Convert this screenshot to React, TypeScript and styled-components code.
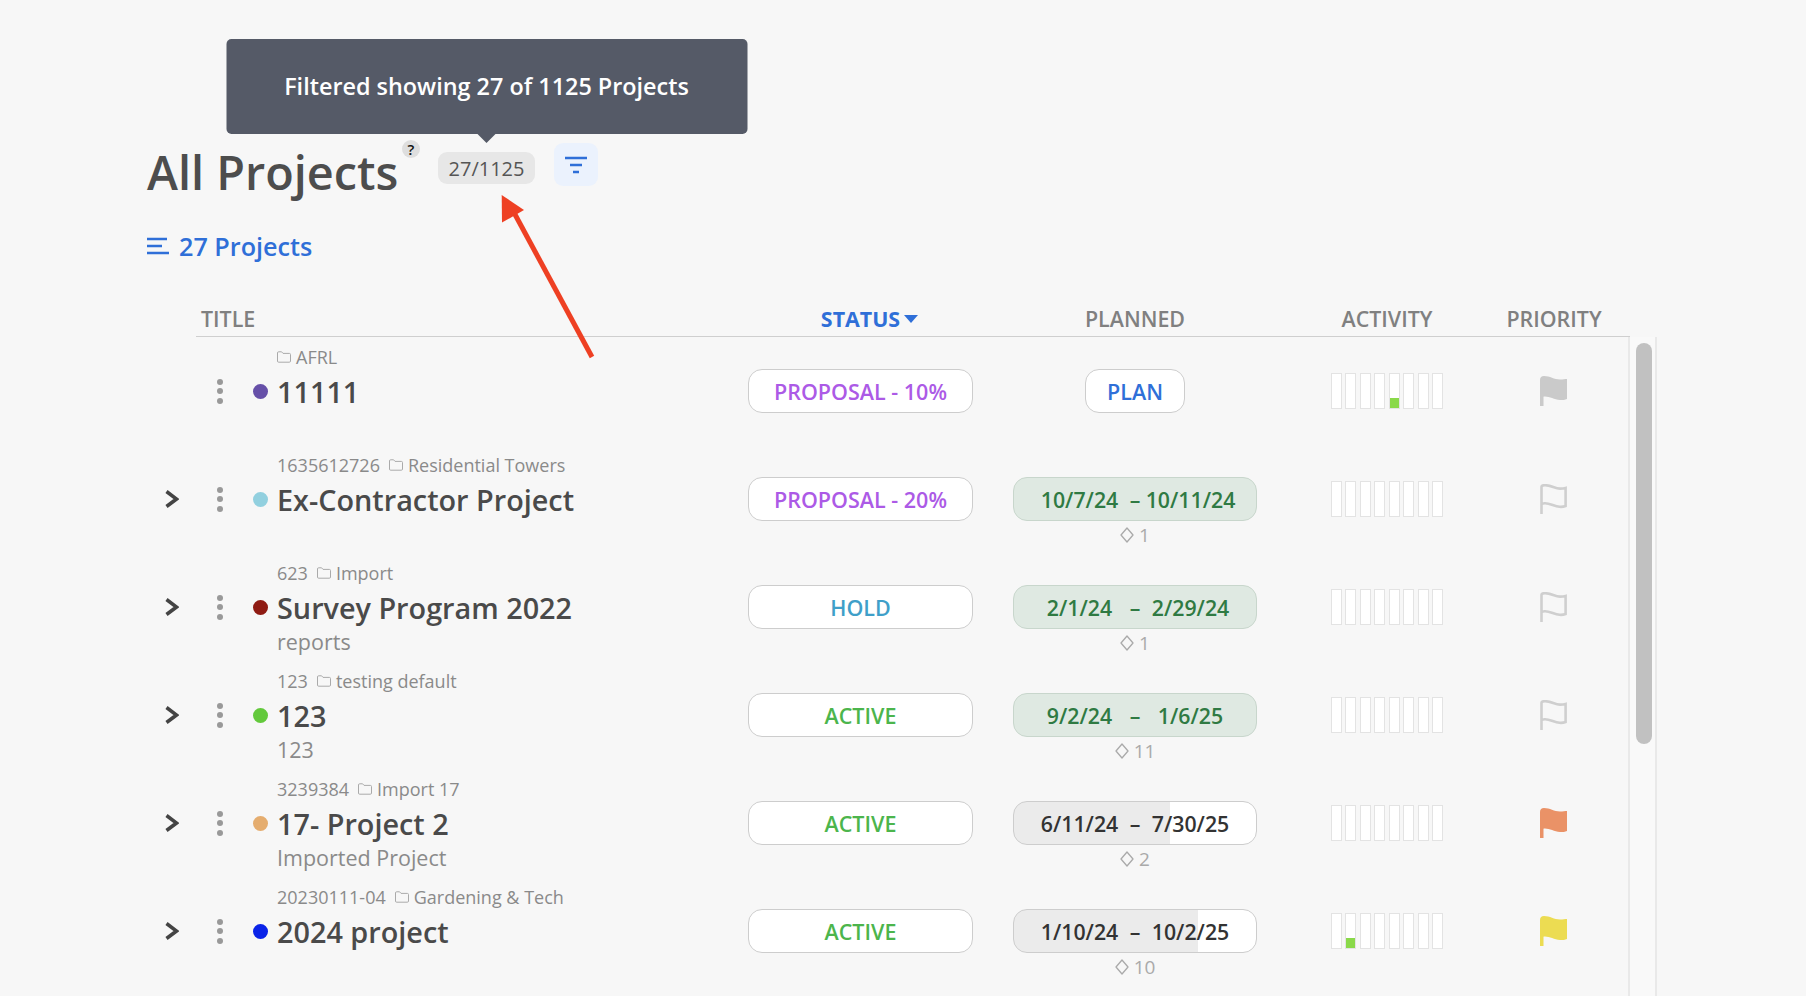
import styled, { createGlobalStyle } from "styled-components";

const GlobalStyle = createGlobalStyle`
  html, body {
    margin: 0;
    padding: 0;
    background: #f7f7f7;
    overflow: hidden;
  }
  * {
    box-sizing: border-box;
  }
`;

const Page = styled.div`
  position: relative;
  width: 1806px;
  height: 996px;
  overflow: hidden;
  padding: 142px 0 0 147px;
  background: #f7f7f7;
  font-family: "Open Sans", "Liberation Sans", sans-serif;
  color: #4a4a4a;
`;

const TitleRow = styled.div`
  display: flex;
  align-items: flex-start;
  height: 60px;
`;

const Title = styled.h1`
  margin: 0;
  width: 251px;
  font-size: 46.8px;
  font-weight: 600;
  line-height: 60px;
  color: #4d4d4d;
  white-space: nowrap;
`;

const HelpBadge = styled.span`
  width: 18px;
  height: 18px;
  margin: -2px 0 0 4px;
  border-radius: 50%;
  background: #dedede;
  color: #111;
  font-size: 15px;
  font-weight: 600;
  line-height: 18px;
  text-align: center;
`;

const CountWrap = styled.div`
  position: relative;
  margin: 10px 0 0 18px;
`;

const CountChip = styled.div`
  width: 97px;
  height: 32px;
  border-radius: 9px;
  background: #e7e7e7;
  color: #555;
  font-size: 20px;
  line-height: 33px;
  text-align: center;
`;

const Tooltip = styled.div`
  position: absolute;
  left: 50%;
  top: -113px;
  transform: translateX(-50%);
  width: 521px;
  height: 95px;
  border-radius: 5px;
  background: #555a67;
  color: #fff;
  font-size: 23.4px;
  font-weight: 600;
  line-height: 95px;
  text-align: center;
  white-space: nowrap;

  &::after {
    content: "";
    position: absolute;
    left: 50%;
    bottom: -9px;
    margin-left: -9px;
    border-left: 9px solid transparent;
    border-right: 9px solid transparent;
    border-top: 9px solid #555a67;
  }
`;

const FilterButton = styled.div`
  display: flex;
  align-items: center;
  justify-content: center;
  width: 44px;
  height: 43px;
  margin: 1px 0 0 19px;
  border-radius: 9px;
  background: #ebf2fd;
`;

const SubHeading = styled.div`
  display: flex;
  align-items: center;
  gap: 10px;
  height: 34px;
  margin-top: 27px;
  color: #2f6fd8;
  font-size: 25.2px;
  font-weight: 600;
`;

const HeaderRow = styled.div`
  display: grid;
  grid-template-columns: 552px 225px 284px 186px 1fr;
  align-items: center;
  width: 1434px;
  height: 33px;
  margin: 41px 0 0 49px;
  border-bottom: 1px solid #cfcfcf;
`;

const HeaderCell = styled.div<{ $padLeft?: number; $active?: boolean }>`
  display: flex;
  align-items: center;
  justify-content: ${(p) => (p.$padLeft === 5 ? "flex-start" : "center")};
  gap: 4px;
  padding-left: ${(p) => p.$padLeft ?? 0}px;
  padding-bottom: 3px;
  color: ${(p) => (p.$active ? "#2f6fd8" : "#808080")};
  font-size: 21.4px;
  font-weight: ${(p) => (p.$active ? 700 : 600)};
`;

const Body = styled.div`
  display: flex;
  align-items: stretch;
`;

const Rows = styled.div`
  width: 1481px;
`;

const Row = styled.div`
  display: grid;
  grid-template-columns: 48px 50px 32px 471px 225px 284px 186px 1fr;
  align-items: center;
  height: 108px;
`;

const Cell = styled.div`
  display: flex;
  align-items: center;
  justify-content: center;
`;

const ColorDot = styled.span<{ $color: string }>`
  width: 15px;
  height: 15px;
  margin-right: 1px;
  border-radius: 50%;
  background: ${(p) => p.$color};
`;

const Kebab = styled.span`
  display: flex;
  flex-direction: column;
  gap: 3.5px;

  i {
    width: 6px;
    height: 6px;
    border-radius: 50%;
    background: #999;
  }
`;

const Info = styled.div`
  display: flex;
  flex-direction: column;
  height: 108px;
`;

const Meta = styled.div`
  display: flex;
  align-items: center;
  gap: 5px;
  height: 34px;
  margin-top: 3px;
  color: #8a8a8a;
  font-size: 18px;
  white-space: nowrap;
`;

const MetaId = styled.span`
  margin-right: 4px;
`;

const ProjectName = styled.div`
  height: 34px;
  margin-top: 1px;
  color: #4a4a4a;
  font-size: 28.8px;
  font-weight: 600;
  line-height: 34px;
  white-space: nowrap;
`;

const Description = styled.div`
  height: 34px;
  color: #8a8a8a;
  font-size: 21.5px;
  line-height: 34px;
`;

const Pill = styled.div<{ $color: string }>`
  display: flex;
  align-items: center;
  justify-content: center;
  width: 225px;
  height: 44px;
  border: 1px solid #cdcdcd;
  border-radius: 14px;
  background: #fff;
  color: ${(p) => p.$color};
  font-size: 21.5px;
  font-weight: 600;
`;

const PlannedCell = styled.div`
  position: relative;
  display: flex;
  justify-content: center;
  padding-left: 40px;
`;

const PlanPill = styled(Pill)`
  width: 100px;
`;

const DatePill = styled.div<{ $progress: number }>`
  display: grid;
  grid-template-columns: 100px 11px 100px;
  justify-content: center;
  align-items: center;
  justify-items: center;
  width: 244px;
  height: 44px;
  border: 1px solid ${(p) => (p.$progress === 100 ? "#c8d6cc" : "#cdcdcd")};
  border-radius: 14px;
  background: ${(p) =>
    p.$progress === 100
      ? "#dfe9e2"
      : `linear-gradient(90deg, #ebebeb ${p.$progress}%, #fff ${p.$progress}%)`};
  color: ${(p) => (p.$progress === 100 ? "#2f7a43" : "#333")};
  font-size: 21.3px;
  font-weight: 600;
`;

const Milestones = styled.div`
  position: absolute;
  left: 40px;
  right: 0;
  top: 46px;
  display: flex;
  align-items: center;
  justify-content: center;
  gap: 5px;
  color: #aaa;
  font-size: 19px;
  line-height: 24px;
`;

const ActivityCell = styled.div`
  display: flex;
  justify-content: flex-end;
`;

const ActivityBars = styled.div`
  display: flex;
  justify-content: space-between;
  width: 112px;
  height: 36px;
`;

const ActivityBar = styled.div`
  display: flex;
  align-items: flex-end;
  width: 11px;
  height: 36px;
  border: 1px solid #e3e3e3;
  background: #fff;
`;

const ActivityFill = styled.div`
  width: 100%;
  height: 10px;
  background: #8ad94a;
`;

const PriorityCell = styled.div`
  display: flex;
  justify-content: center;
  padding-left: 35px;
`;

const ScrollTrack = styled.div`
  width: 29px;
  height: 660px;
  padding: 6px 6px 0;
  border-left: 2px solid #e9e9e9;
  border-right: 2px solid #e9e9e9;
  background: #f9f9f9;
`;

const ScrollThumb = styled.div`
  width: 16px;
  height: 401px;
  border-radius: 8px;
  background: #c1c1c1;
`;

const ArrowOverlay = styled.svg`
  position: absolute;
  left: 480px;
  top: 180px;
`;

const Chevron = () => (
  <svg width="15" height="18" viewBox="0 0 15 18" fill="none">
    <path d="M2.5 1.5 L12.5 9 L2.5 16.5" stroke="#444" strokeWidth="3.6" />
  </svg>
);

const Folder = () => (
  <svg width="14" height="12" viewBox="0 0 14 12" fill="none">
    <path
      d="M.5 2 Q.5 .8 1.6 .8 H4.6 L6 2.4 H12.4 Q13.5 2.4 13.5 3.5 V10 Q13.5 11.2 12.4 11.2 H1.6 Q.5 11.2 .5 10 Z"
      stroke="#aaa"
    />
  </svg>
);

const Diamond = () => (
  <svg width="14" height="16" viewBox="0 0 14 16" fill="none">
    <path d="M7 1 L13 8 L7 15 L1 8 Z" stroke="#aaa" strokeWidth="1.3" strokeLinejoin="round" />
  </svg>
);

const Caret = () => (
  <svg width="14" height="8" viewBox="0 0 14 8">
    <path d="M0 0 H14 L7 8 Z" fill="#2f6fd8" />
  </svg>
);

const FLAG =
  "M0 30 V4 C0 1.5 1.5 0 4 0 C10 0 14 3.5 20 3.5 C23 3.5 25 3 27 3 V23 C25 24 23 24 20 24 C14 23.5 9 20 4 20.5 C3.5 20.5 3.5 21 3.5 22 V30 Z";

const Flag = ({ color, outline }: { color: string; outline?: boolean }) => (
  <svg width="27" height="30" viewBox="0 0 27 30">
    {outline ? (
      <path
        d="M1.5 30 V3 C1.5 1.5 3 1.2 5 1.2 C11 1.2 15 4.6 20 4.6 C22 4.6 24 4.4 25.6 4 V22 C23.5 22.8 21.5 23 19.5 22.8 C14 22 9 18.8 4.5 19.2 C3 19.3 2 19.8 1.5 20.4"
        fill="none"
        stroke={color}
        strokeWidth="2.6"
      />
    ) : (
      <path d={FLAG} fill={color} />
    )}
  </svg>
);

interface Project {
  id?: string;
  folder: string;
  name: string;
  description?: string;
  dot: string;
  status: string;
  statusColor: string;
  from?: string;
  to?: string;
  progress?: number;
  milestones?: number;
  activity?: number;
  flag: string;
  flagOutline?: boolean;
  expandable: boolean;
}

const PURPLE = "#ac5ae6";
const GREEN = "#4cb54c";

const projects: Project[] = [
  { folder: "AFRL", name: "11111", dot: "#6650a8", status: "PROPOSAL - 10%", statusColor: PURPLE, activity: 4, flag: "#cacaca", expandable: false },
  { id: "1635612726", folder: "Residential Towers", name: "Ex-Contractor Project", dot: "#92d0df", status: "PROPOSAL - 20%", statusColor: PURPLE, from: "10/7/24", to: "10/11/24", progress: 100, milestones: 1, flag: "#cfcfcf", flagOutline: true, expandable: true },
  { id: "623", folder: "Import", name: "Survey Program 2022", description: "reports", dot: "#8f1b13", status: "HOLD", statusColor: "#3f9fc9", from: "2/1/24", to: "2/29/24", progress: 100, milestones: 1, flag: "#cfcfcf", flagOutline: true, expandable: true },
  { id: "123", folder: "testing default", name: "123", description: "123", dot: "#63c93c", status: "ACTIVE", statusColor: GREEN, from: "9/2/24", to: "1/6/25", progress: 100, milestones: 11, flag: "#cfcfcf", flagOutline: true, expandable: true },
  { id: "3239384", folder: "Import 17", name: "17- Project 2", description: "Imported Project", dot: "#e5ad6f", status: "ACTIVE", statusColor: GREEN, from: "6/11/24", to: "7/30/25", progress: 64.5, milestones: 2, flag: "#ea9267", expandable: true },
  { id: "20230111-04", folder: "Gardening & Tech", name: "2024 project", dot: "#0a23e8", status: "ACTIVE", statusColor: GREEN, from: "1/10/24", to: "10/2/25", progress: 76, milestones: 10, activity: 1, flag: "#ecdc52", expandable: true },
];

const App = () => {
  return (
    <Page>
      <GlobalStyle />
      <TitleRow>
        <Title>All Projects</Title>
        <HelpBadge>?</HelpBadge>
        <CountWrap>
          <Tooltip>Filtered showing 27 of 1125 Projects</Tooltip>
          <CountChip>27/1125</CountChip>
        </CountWrap>
        <FilterButton>
          <svg width="22" height="18" viewBox="0 0 22 18" fill="none">
            <path d="M0 2 H22 M5 9 H17 M8 16 H14" stroke="#2f6fd8" strokeWidth="2.4" />
          </svg>
        </FilterButton>
      </TitleRow>

      <SubHeading>
        <svg width="22" height="18" viewBox="0 0 22 18" fill="none">
          <path d="M0 2 H20 M0 9 H15 M0 16 H22" stroke="#2f6fd8" strokeWidth="2.6" />
        </svg>
        27 Projects
      </SubHeading>

      <HeaderRow>
        <HeaderCell $padLeft={5}>TITLE</HeaderCell>
        <HeaderCell $active $padLeft={18}>
          STATUS
          <Caret />
        </HeaderCell>
        <HeaderCell $padLeft={40}>PLANNED</HeaderCell>
        <HeaderCell $padLeft={74}>ACTIVITY</HeaderCell>
        <HeaderCell $padLeft={35}>PRIORITY</HeaderCell>
      </HeaderRow>

      <Body>
        <Rows>
          {projects.map((project) => (
            <Row key={project.name}>
              <Cell>{project.expandable && <Chevron />}</Cell>
              <Cell>
                <Kebab>
                  <i />
                  <i />
                  <i />
                </Kebab>
              </Cell>
              <Cell>
                <ColorDot $color={project.dot} />
              </Cell>
              <Info>
                <Meta>
                  {project.id && <MetaId>{project.id}</MetaId>}
                  <Folder />
                  {project.folder}
                </Meta>
                <ProjectName>{project.name}</ProjectName>
                <Description>{project.description}</Description>
              </Info>
              <Cell>
                <Pill $color={project.statusColor}>{project.status}</Pill>
              </Cell>
              <PlannedCell>
                {project.from ? (
                  <DatePill $progress={project.progress ?? 0}>
                    <span>{project.from}</span>
                    <span>–</span>
                    <span>{project.to}</span>
                  </DatePill>
                ) : (
                  <PlanPill $color="#2f6fd8">PLAN</PlanPill>
                )}
                {project.milestones !== undefined && (
                  <Milestones>
                    <Diamond />
                    {project.milestones}
                  </Milestones>
                )}
              </PlannedCell>
              <ActivityCell>
                <ActivityBars>
                  {Array.from({ length: 8 }, (_, i) => (
                    <ActivityBar key={i}>{project.activity === i && <ActivityFill />}</ActivityBar>
                  ))}
                </ActivityBars>
              </ActivityCell>
              <PriorityCell>
                <Flag color={project.flag} outline={project.flagOutline} />
              </PriorityCell>
            </Row>
          ))}
        </Rows>
        <ScrollTrack>
          <ScrollThumb />
        </ScrollTrack>
      </Body>

      <ArrowOverlay width="130" height="190" viewBox="480 180 130 190">
        <path d="M592 357 L511 207" stroke="#ee4023" strokeWidth="5" />
        <path d="M501.7 195 L524 210 L502 222.6 Z" fill="#ee4023" />
      </ArrowOverlay>
    </Page>
  );
};

export default App;
